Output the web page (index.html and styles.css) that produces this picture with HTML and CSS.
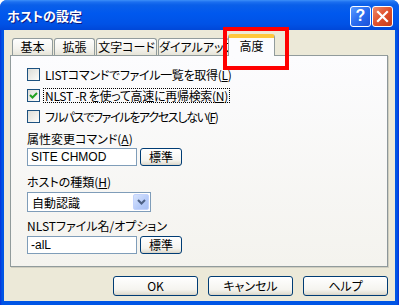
FILE: index.html
```html
<!DOCTYPE html>
<html lang="ja">
<head>
    <meta charset="UTF-8">
    <title>ホストの設定</title>
    <link rel="stylesheet" href="styles.css">
</head>
<body>

<div class="window">
    <div class="titlebar">
        <span class="title">ホストの設定</span>
        <div class="caption-buttons">
            <span class="cap-btn help">?</span>
            <span class="cap-btn close">
                <svg width="13" height="13" viewBox="0 0 13 13"><path d="M2 2 L11 11 M11 2 L2 11" stroke="#fff" stroke-width="2.2" stroke-linecap="square"/></svg>
            </span>
        </div>
    </div>

    <div class="client">
        <div class="tabs">
            <div class="tab w41">基本</div>
            <div class="tab w41">拡張</div>
            <div class="tab w61">文字コード</div>
            <div class="tab w72">ダイアルアップ</div>
            <div class="tab selected">高度</div>
        </div>

        <div class="panel">
            <div class="check-row">
                <span class="box"></span>
                <span class="check-label">LISTコマンドでファイル一覧を取得(<u>L</u>)</span>
            </div>
            <div class="check-row">
                <span class="box checked">
                    <svg width="11" height="11" viewBox="0 0 11 11"><path d="M2 5 L4.5 7.5 L9 3" fill="none" stroke="#21a121" stroke-width="2"/></svg>
                </span>
                <span class="check-label focus">NLST -R を使って高速に再帰検索(<u>N</u>)</span>
            </div>
            <div class="check-row">
                <span class="box"></span>
                <span class="check-label kana">フルパスでファイルをアクセスしない(<u>F</u>)</span>
            </div>

            <div class="field-label first">属性変更コマンド(<u>A</u>)</div>
            <div class="field-row">
                <div class="textbox">SITE CHMOD</div>
                <button class="btn small">標準</button>
            </div>

            <div class="field-label">ホストの種類(<u>H</u>)</div>
            <div class="select">
                <span class="select-text">自動認識</span>
                <span class="select-arrow">
                    <svg width="9" height="6" viewBox="0 0 9 6"><path d="M1 1 L4.5 4.5 L8 1" fill="none" stroke="#4d6185" stroke-width="2"/></svg>
                </span>
            </div>

            <div class="field-label last">NLSTファイル名/オプション</div>
            <div class="field-row">
                <div class="textbox">-alL</div>
                <button class="btn small">標準</button>
            </div>
        </div>

        <div class="buttons">
            <button class="btn">OK</button>
            <button class="btn">キャンセル</button>
            <button class="btn">ヘルプ</button>
        </div>

        <div class="highlight"></div>
    </div>
</div>

</body>
</html>
```

FILE: styles.css
```css
body {
    margin: 0;
    padding: 0;
    font-family: "Noto Sans CJK JP", "Noto Sans", sans-serif;
    font-size: 12px;
    font-feature-settings: "palt";
    color: #000;
    background: #fff;
}

.window {
    width: 399px;
    height: 305px;
    box-sizing: border-box;
    display: flex;
    flex-direction: column;
    background: linear-gradient(to right, #0831d9, #0055e5 2px, #0055e5 calc(100% - 2px), #0831d9);
    border-radius: 7px 7px 0 0;
    overflow: hidden;
    padding: 0 4px 4px 4px;
}

.titlebar {
    height: 30px;
    margin: 0 -4px;
    padding: 0 6px 0 7px;
    display: flex;
    align-items: center;
    justify-content: space-between;
    background: linear-gradient(#3d8ff8 0, #1c6ff0 2px, #0a5fe9 5px, #0058ee 45%, #0052e6 80%, #0047d8 100%);
}

.title {
    color: #fff;
    font-weight: bold;
    font-size: 13px;
    text-shadow: 1px 1px #0a1883;
}

.caption-buttons {
    display: flex;
    gap: 1px;
    margin-top: 2px;
}

.cap-btn {
    width: 19px;
    height: 19px;
    border: 1px solid #fff;
    border-radius: 3px;
    display: flex;
    align-items: center;
    justify-content: center;
    color: #fff;
    font-family: "Liberation Sans", sans-serif;
    font-weight: bold;
    font-size: 16px;
}

.help {
    background: linear-gradient(135deg, #5a9bff, #2a6cf0 50%, #1c50d8);
}

.close {
    background: linear-gradient(135deg, #ef8a6c, #e0502c 50%, #c73c1a);
}

.client {
    position: relative;
    flex: 1;
    background: #ece9d8;
    padding: 4px 7px 0 6px;
}

.tabs {
    height: 21px;
    display: flex;
    align-items: flex-end;
    padding-left: 2px;
    position: relative;
    z-index: 1;
}

.tab {
    height: 17px;
    box-sizing: border-box;
    margin-right: 1px;
    border: 1px solid #919b9c;
    border-bottom: none;
    border-radius: 3px 3px 0 0;
    background: linear-gradient(#fefefe, #f4f3ee 60%, #e6e4d8);
    text-align: center;
    line-height: 15px;
    white-space: nowrap;
    overflow: hidden;
}

.w41 { width: 41px; }
.w61 { width: 61px; }
.w72 { width: 71px; }

.tab.selected {
    width: 47px;
    height: 22px;
    margin: 0 0 -1px -2px;
    background: #fcfcfe;
    border-top: 3px solid #ffc73c;
    box-shadow: inset 0 1px 0 #ffc73c;
    line-height: 17px;
    position: relative;
}

.tab.selected::before {
    content: "";
    position: absolute;
    left: -1px;
    right: -1px;
    top: -3px;
    height: 1px;
    background: #e68b2c;
    border-radius: 3px 3px 0 0;
}

.panel {
    width: 378px;
    height: 212px;
    box-sizing: border-box;
    border: 1px solid #919b9c;
    border-right-color: #8c9699;
    box-shadow: 1px 1px 0 #d0cec0;
    background: linear-gradient(#fcfcfe, #f4f3ee);
    padding: 8px 0 0 16px;
}

.check-row {
    height: 21px;
    display: flex;
    align-items: center;
}

.box {
    width: 13px;
    height: 13px;
    box-sizing: border-box;
    border: 1px solid #1c5180;
    background: linear-gradient(135deg, #dcdcd7, #f6f6f3 80%, #fff);
    margin-right: 3px;
    display: flex;
    align-items: center;
    justify-content: center;
}

.check-label {
    padding: 0 1px;
    border: 1px solid transparent;
    line-height: 13px;
    letter-spacing: -0.3px;
}

.check-label.kana {
    letter-spacing: -1.3px;
}

.check-label.focus {
    border: 1px dotted #000;
}

.field-label {
    height: 14px;
    line-height: 14px;
    margin: 9px 0 1px 0;
}

.field-label.first {
    margin-top: 5px;
}

.field-label.last {
    margin: 7px 0 2px 0;
}

.field-row {
    display: flex;
    align-items: center;
    gap: 3px;
}

.textbox {
    width: 110px;
    height: 18px;
    box-sizing: border-box;
    border: 1px solid #7f9db9;
    background: #fff;
    padding: 0 3px;
    line-height: 16px;
    font-family: "Liberation Sans", "Noto Sans CJK JP", sans-serif;
}

.btn {
    font-family: "Noto Sans CJK JP", "Noto Sans", sans-serif;
    font-size: 12px;
    font-feature-settings: "palt";
    color: #000;
    width: 85px;
    height: 20px;
    padding: 0;
    border: 1px solid #003c74;
    border-radius: 3px;
    background: linear-gradient(#ffffff, #f5f4ef 70%, #e3e0d5 92%, #d6d0c5);
    line-height: 16px;
}

.btn.small {
    width: 42px;
    height: 18px;
    margin-top: 1px;
}

.select {
    width: 124px;
    height: 20px;
    box-sizing: border-box;
    border: 1px solid #7f9db9;
    background: #fff;
    display: flex;
    align-items: center;
    justify-content: space-between;
    padding: 1px;
    margin-top: 3px;
}

.select-text {
    padding-left: 3px;
}

.select-arrow {
    width: 16px;
    height: 16px;
    border-radius: 2px;
    background: linear-gradient(135deg, #d8e4fd, #b6cbf9 60%, #a9c1f5);
    border: 1px solid #c3d3fd;
    box-sizing: border-box;
    display: flex;
    align-items: center;
    justify-content: center;
}

.buttons {
    display: flex;
    justify-content: flex-end;
    gap: 10px;
    margin-top: 9px;
    width: 378px;
}

.highlight {
    position: absolute;
    left: 219px;
    top: -3px;
    width: 58px;
    height: 35px;
    border: 4px solid #ff0000;
    z-index: 2;
}
```
